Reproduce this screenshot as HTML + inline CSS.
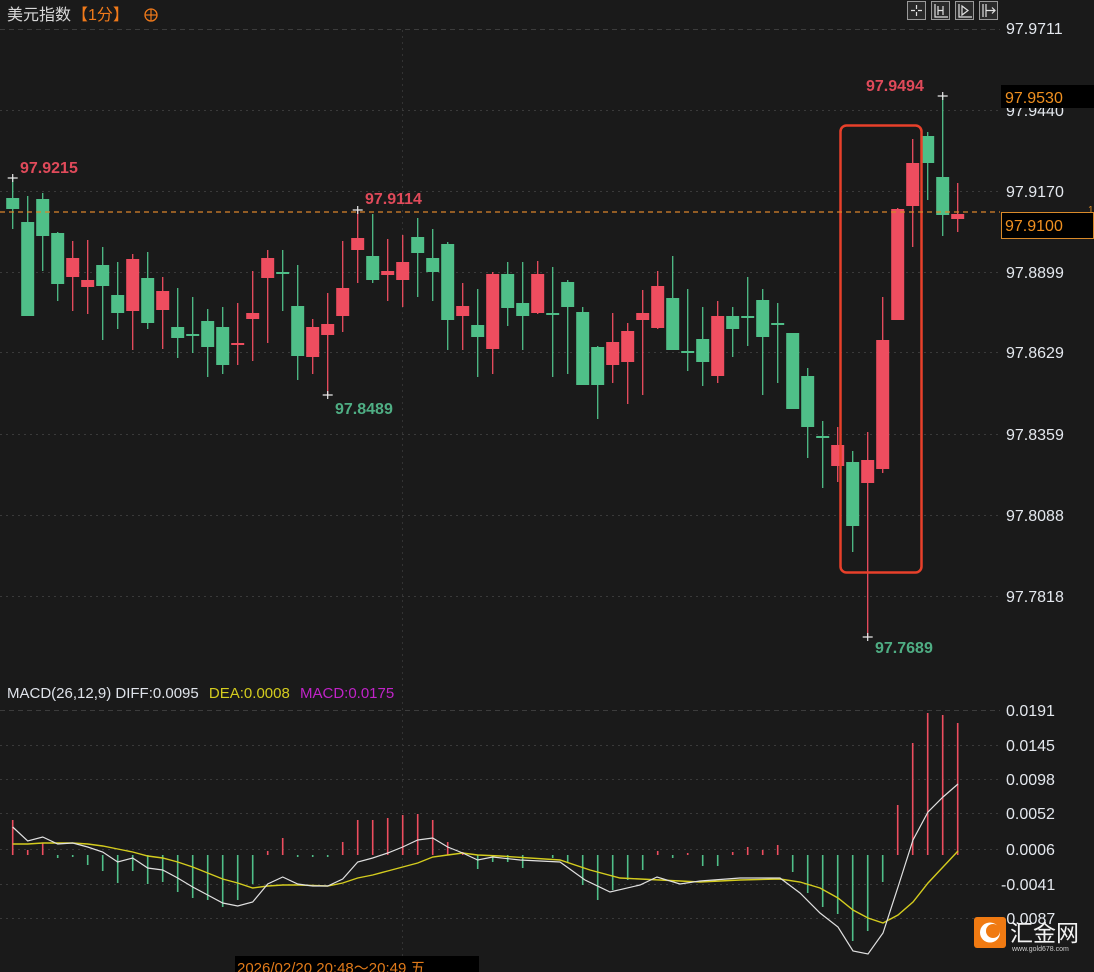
<!DOCTYPE html>
<html><head><meta charset="utf-8"><style>
html,body{margin:0;padding:0;background:#1a1a1a;width:1094px;height:972px;overflow:hidden}
svg{display:block}
text{font-family:"Liberation Sans","Noto Sans CJK SC",sans-serif}
</style></head><body>
<svg id="s" width="1094" height="972" xmlns="http://www.w3.org/2000/svg">
<rect width="1094" height="972" fill="#1a1a1a"/>
<g id="grid"></g>
<text x="7" y="20" font-size="16" fill="#d8d8d8">美元指数</text>
<text x="72" y="20" font-size="16" fill="#f07a1a">【1分】</text>
<circle cx="151" cy="15" r="6" fill="none" stroke="#f07a1a" stroke-width="1.3"/>
<line x1="145" y1="15" x2="157" y2="15" stroke="#f07a1a" stroke-width="1.2"/>
<line x1="151" y1="9" x2="151" y2="21" stroke="#f07a1a" stroke-width="1.2"/>
<g fill="#2a2a2a" stroke="#9a9a9a" stroke-width="1">
<rect x="907.5" y="1.5" width="18" height="18"/><rect x="931.5" y="1.5" width="18" height="18"/><rect x="955.5" y="1.5" width="18" height="18"/><rect x="979.5" y="1.5" width="18" height="18"/>
</g>
<g stroke="#e0e0e0" stroke-width="1.2" fill="none">
<path d="M916.5 5v4M916.5 12v4M911 10.5h4M918 10.5h4"/>
<path d="M935 4v13h13M938 6v9M943 6v9M938 10.5h5"/>
<path d="M959 4v13h13M962 6l6 4.5-6 4.5z"/>
<path d="M983 4v13M986 4v13M986 10.5h9M992 7.5l3 3-3 3"/>
</g>
<g id="candles"></g>
<rect x="840.5" y="125.5" width="81" height="447" rx="6" fill="none" stroke="#e8402a" stroke-width="2.5"/>
<line x1="0" y1="212" x2="1000" y2="212" stroke="#d9852a" stroke-width="1.2" stroke-dasharray="5,4"/>
<g font-size="16" font-weight="bold">
<text x="20" y="173" fill="#e04a5a">97.9215</text>
<text x="365" y="204" fill="#e04a5a">97.9114</text>
<text x="335" y="414" fill="#4fae84">97.8489</text>
<text x="866" y="91" fill="#e04a5a">97.9494</text>
<text x="875" y="653" fill="#4fae84">97.7689</text>
</g>
<g id="yl" font-size="16" fill="#e4e8ee"></g>
<rect x="1001" y="85" width="93" height="23" fill="#000"/>
<text x="1005" y="103" font-size="16" fill="#f09020">97.9530</text>
<rect x="1001.5" y="212.5" width="92" height="26" fill="#000" stroke="#d98a2a" stroke-width="1"/>
<text x="1005" y="231" font-size="16" fill="#f09020">97.9100</text>
<text x="1088" y="213" font-size="10" fill="#d98a2a">1</text>
<text x="7" y="698" font-size="15"><tspan fill="#dfe3ea">MACD(26,12,9) DIFF:0.0095 </tspan><tspan fill="#d4cc1e" dx="6">DEA:0.0008 </tspan><tspan fill="#c023c8" dx="6">MACD:0.0175</tspan></text>
<g id="macd"></g>
<rect x="235" y="956" width="244" height="16" fill="#000"/>
<text x="237" y="973" font-size="15" fill="#e07a1a">2026/02/20 20:48～20:49 五</text>
<rect x="974" y="917" width="32" height="31" rx="3" fill="#f07a12"/>
<circle cx="990" cy="932.5" r="10" fill="#fff"/>
<circle cx="993" cy="931" r="7" fill="#f07a12"/>
<text x="1010" y="941" font-size="23" fill="#f2f2f2" font-family="Noto Sans CJK SC,sans-serif">汇金网</text>
<text x="1012" y="951" font-size="7" fill="#ccc">www.gold678.com</text>
</svg>
<script>
var NS="http://www.w3.org/2000/svg";
function el(p,t,a){var e=document.createElementNS(NS,t);for(var k in a)e.setAttribute(k,a[k]);document.getElementById(p).appendChild(e);return e;}
// grid
[110,191,272,352,434,515,596,745,779,813,849,884,918].forEach(function(y){el("grid","line",{x1:0,x2:1000,y1:y+.5,y2:y+.5,stroke:"#3a3a3a","stroke-dasharray":"2,4"});});
[29,710].forEach(function(y){el("grid","line",{x1:0,x2:1000,y1:y+.5,y2:y+.5,stroke:"#3c3c3c","stroke-dasharray":"5,4"});});
el("grid","line",{x1:402.5,x2:402.5,y1:30,y2:972,stroke:"#333","stroke-dasharray":"2,4"});
var yl=[["97.9711",28],["97.9440",110],["97.9170",191],["97.8899",272],["97.8629",352],["97.8359",434],["97.8088",515],["97.7818",596],["0.0191",710],["0.0145",745],["0.0098",779],["0.0052",813],["0.0006",849],["-0.0041",884],["-0.0087",918]];
yl.forEach(function(a){var t=el("yl","text",{x:a[0][0]=="-"?1001:1006,y:a[1]+6});t.textContent=a[0];});
var G="#4fbf88",R="#ee4d5f";
var C=[["g",198,209,178,229],["g",222,316,196,316],["g",199,236,193,271],["g",233,284,232,301],["r",258,277,241,311],["r",280,287,240,314],["g",265,286,247,340],["g",295,313,262,329],["r",259,311,254,350],["g",278,323,252,329],["r",291,310,277,349],["g",327,338,288,358],["g",334,336,297,353],["g",321,347,309,377],["g",327,365,307,374],["r",343,345,303,365],["r",313,319,271,361],["r",258,278,250,343],["g",272,274,250,311],["g",306,356,265,380],["r",327,357,319,374],["r",324,335,293,395],["r",288,316,241,332],["r",238,250,210,283],["g",256,280,214,283],["r",271,275,239,301],["r",262,280,235,307],["g",237,253,218,297],["g",258,272,229,301],["g",244,320,242,350],["r",306,316,283,350],["g",325,337,289,377],["r",274,349,272,374],["g",274,308,262,326],["g",303,316,262,350],["r",274,313,261,314],["g",313,315,267,377],["g",282,307,280,374],["g",312,385,307,385],["g",347,385,346,419],["r",342,365,313,383],["r",331,362,323,404],["r",313,320,290,395],["r",286,328,271,329],["g",298,350,256,350],["g",351,353,289,371],["g",339,362,307,386],["r",316,376,301,383],["g",316,329,307,357],["g",316,318,277,346],["g",300,337,289,395],["g",323,325,303,383],["g",333,409,333,409],["g",376,427,368,458],["g",436,438,421,488],["r",445,466,427,482],["g",462,526,451,552],["r",460,483,432,637],["r",340,469,297,473],["r",209,320,208,320],["r",163,206,139,247],["g",136,163,132,200],["g",177,215,96,236],["r",214,219,183,232]];
C.forEach(function(c,i){var x=12.7+15*i,col=c[0]=="g"?G:R;
el("candles","line",{x1:x,x2:x,y1:c[3],y2:c[4],stroke:col,"stroke-width":1.3});
var h=Math.max(c[2]-c[1],1.5);el("candles","rect",{x:x-6.5,y:c[1],width:13,height:h,fill:col});});
[[12.7,178],[357.7,210],[942.7,96],[327.7,395],[867.7,637]].forEach(function(p){el("candles","path",{d:"M"+(p[0]-5)+" "+p[1]+"h10M"+p[0]+" "+(p[1]-4)+"v8",stroke:"#e8e8e8","stroke-width":1.2});});
// macd histogram
var H=[820,850,843,858,857,865,871,883,871,884,882,892,898,900,907,900,884,851,838,857,857,857,842,820,820,818,815,814,820,842,852,869,862,862,868,855,858,862,885,900,890,880,870,851,858,853,866,866,852,847,850,845,872,893,907,914,941,931,882,805,743,713,715,723];
H.forEach(function(y,i){var x=12.7+15*i;var col=y<855?R:G;if(Math.abs(y-855)<1)return;el("macd","line",{x1:x,x2:x,y1:855,y2:y,stroke:col,"stroke-width":1.6});});
var W=[[12.7,827],[27.7,841],[42.7,837],[57.7,844],[72.7,843],[87.7,847],[102.7,852],[117.7,862],[132.7,858],[147.7,868],[162.7,870],[177.7,878],[192.7,887],[207.7,895],[222.7,903],[237.7,906],[252.7,902],[267.7,884],[282.7,877],[297.7,884],[312.7,886],[327.7,886],[342.7,879],[357.7,862],[372.7,858],[387.7,853],[402.7,847],[417.7,840],[432.7,838],[447.7,847],[462.7,853],[477.7,860],[492.7,857],[520,860],[560,862],[585,880],[610,892],[640,885],[657,877],[680,884],[700,881],[740,878],[780,878],[800,893],[820,913],[838,927],[853,951],[868,954],[883,933],[898,887],[913,840],[928,812],[943,797],[958,784]];
var Y=[[12.7,844],[27.7,844],[42.7,843],[72.7,843],[87.7,844],[102.7,846],[117.7,849],[132.7,852],[147.7,856],[162.7,858],[177.7,862],[192.7,867],[207.7,873],[222.7,879],[237.7,883],[252.7,888],[267.7,886],[282.7,885],[297.7,885],[327.7,886],[342.7,883],[357.7,878],[372.7,875],[387.7,871],[402.7,867],[417.7,863],[432.7,857],[447.7,855],[462.7,853],[477.7,855],[500,856],[560,860],[590,870],[620,878],[660,880],[700,882],[740,880],[780,879],[800,882],[820,888],[838,898],[853,910],[868,918],[883,923],[898,915],[913,902],[928,883],[943,867],[958,851]];
function pts(a){return a.map(function(p){return p.join(",")}).join(" ");}
el("macd","polyline",{points:pts(Y),fill:"none",stroke:"#d4cc1e","stroke-width":1.4});
el("macd","polyline",{points:pts(W),fill:"none",stroke:"#e0e0e0","stroke-width":1.2});
</script>
</body></html>
